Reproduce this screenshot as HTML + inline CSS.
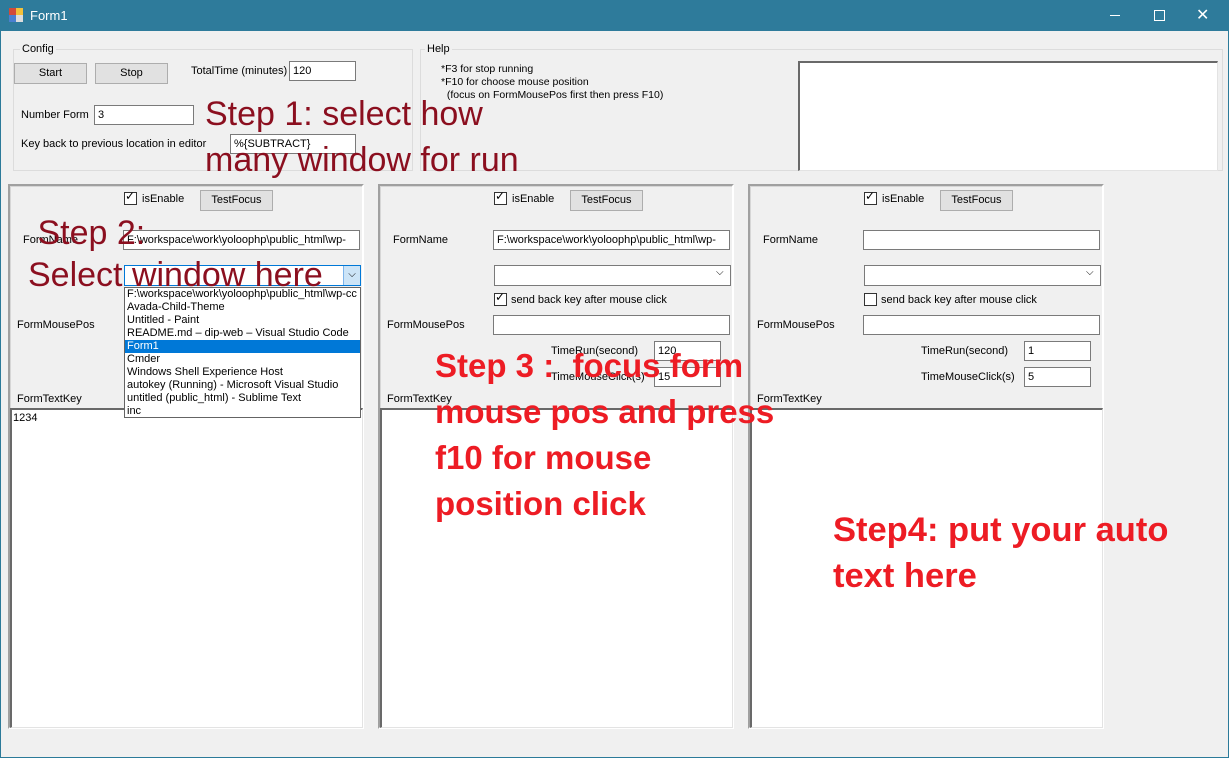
<!DOCTYPE html>
<html><head><meta charset="utf-8"><style>
*{margin:0;padding:0;box-sizing:border-box}
body{width:1229px;height:758px;background:#f0f0f0;font-family:"Liberation Sans",sans-serif;font-size:11px;color:#000;position:relative;overflow:hidden}
.a{position:absolute;white-space:nowrap}
.win{position:absolute;left:0;top:0;width:1229px;height:758px;border:1px solid #2b7a99;border-top:none}
.title{position:absolute;left:0;top:0;width:1229px;height:31px;background:#2e7b9b;color:#fff;font-size:12px}
.tb{position:absolute;background:#fff;border:1px solid #7a7a7a;font-size:11px;padding:2px 3px;line-height:14px;overflow:hidden}
.btn{position:absolute;background:#e1e1e1;border:1px solid #adadad;text-align:center;line-height:18px;font-size:11px}
.grp{position:absolute;border:1px solid #dcdcdc}
.panel{position:absolute;border-top:2px solid #a0a0a0;border-left:2px solid #a0a0a0;border-right:2px solid #fff;border-bottom:2px solid #fff;box-shadow:1px 1px 0 #d6d6d6 inset}
.ta{position:absolute;background:#fff;border-left:2px solid #696969;border-top:2px solid #696969;border-right:1px solid #e3e3e3;border-bottom:1px solid #e3e3e3}
.cb{position:absolute;width:13px;height:13px;border:1px solid #333;background:#fff}
.big1{color:#8b0f1f;font-size:34px;line-height:46px}
.big2{color:#ed1c24;font-weight:bold;line-height:46px}
</style></head><body>
<div class="win"></div>
<div class="title">
 <div class="a" style="left:9px;top:8px;width:7px;height:7px;background:#d24a3a"></div>
 <div class="a" style="left:16px;top:8px;width:7px;height:7px;background:#f3c13a"></div>
 <div class="a" style="left:9px;top:15px;width:7px;height:7px;background:#4a7fd0"></div>
 <div class="a" style="left:16px;top:15px;width:7px;height:7px;background:#ddd"></div>
 <div class="a" style="left:30px;top:8px;font-size:13px">Form1</div>
 <div class="a" style="left:1110px;top:15px;width:10px;height:1px;background:#fff"></div>
 <div class="a" style="left:1154px;top:10px;width:11px;height:11px;border:1px solid #fff"></div>
 <div class="a" style="left:1196px;top:5px;font-size:16px;color:#fff">✕</div>
</div>

<div class="grp" style="left:13px;top:49px;width:400px;height:122px"></div>
<div class="a" style="left:20px;top:43px;background:#f0f0f0;padding:0 2px">Config</div>
<div class="btn" style="left:14px;top:63px;width:73px;height:21px">Start</div>
<div class="btn" style="left:95px;top:63px;width:73px;height:21px">Stop</div>
<div class="a" style="left:191px;top:65px">TotalTime (minutes)</div>
<div class="tb" style="left:289px;top:61px;width:67px;height:20px">120</div>
<div class="a" style="left:21px;top:109px">Number Form</div>
<div class="tb" style="left:94px;top:105px;width:100px;height:20px">3</div>
<div class="a" style="left:21px;top:138px">Key back to previous location in editor</div>
<div class="tb" style="left:230px;top:134px;width:126px;height:20px">%{SUBTRACT}</div>

<div class="grp" style="left:420px;top:49px;width:803px;height:122px"></div>
<div class="a" style="left:425px;top:43px;background:#f0f0f0;padding:0 2px">Help</div>
<div class="a" style="left:441px;top:63px;line-height:13px;font-size:10.5px">*F3 for stop running<br>*F10 for choose mouse position<br>&nbsp; (focus on FormMousePos first then press F10)</div>
<div class="ta" style="left:798px;top:61px;width:420px;height:110px"></div>

<div class="panel" style="left:8px;top:184px;width:356px;height:545px"></div>
<div class="panel" style="left:378px;top:184px;width:356px;height:545px"></div>
<div class="panel" style="left:748px;top:184px;width:356px;height:545px"></div>

<!-- panel 1 -->
<div class="cb" style="left:124px;top:192px"></div><div class="a" style="left:125px;top:189px;font-size:12px">✓</div>
<div class="a" style="left:142px;top:193px">isEnable</div>
<div class="btn" style="left:200px;top:190px;width:73px;height:21px">TestFocus</div>
<div class="a" style="left:23px;top:234px">FormName</div>
<div class="tb" style="left:123px;top:230px;width:237px;height:20px">F:\workspace\work\yoloophp\public_html\wp-cc</div>
<div class="a" style="left:17px;top:319px">FormMousePos</div>
<div class="a" style="left:17px;top:393px">FormTextKey</div>
<div class="ta" style="left:10px;top:408px;width:353px;height:320px"><div style="padding:2px 1px">1234</div></div>
<div class="a" style="left:124px;top:265px;width:237px;height:21px;border:1px solid #0078d7;background:#fff"></div>
<div class="a" style="left:343px;top:266px;width:17px;height:19px;background:#cce4f7;border-left:1px solid #7eb4ea;text-align:center;font-size:10px;line-height:18px">⌵</div>
<div class="a" style="left:124px;top:287px;width:237px;height:131px;border:1px solid #646464;background:#fff;line-height:13px;font-size:11px;padding-left:2px;overflow:hidden">
F:\workspace\work\yoloophp\public_html\wp-cc<br>Avada-Child-Theme<br>Untitled - Paint<br>README.md – dip-web – Visual Studio Code<br><div style="background:#0078d7;color:#fff;margin-left:-2px;padding-left:2px">Form1</div>Cmder<br>Windows Shell Experience Host<br>autokey (Running) - Microsoft Visual Studio<br>untitled (public_html) - Sublime Text<br>inc</div>

<!-- panel 2 -->
<div class="cb" style="left:494px;top:192px"></div><div class="a" style="left:495px;top:189px;font-size:12px">✓</div>
<div class="a" style="left:512px;top:193px">isEnable</div>
<div class="btn" style="left:570px;top:190px;width:73px;height:21px">TestFocus</div>
<div class="a" style="left:393px;top:234px">FormName</div>
<div class="tb" style="left:493px;top:230px;width:237px;height:20px">F:\workspace\work\yoloophp\public_html\wp-cc</div>
<div class="tb" style="left:494px;top:265px;width:237px;height:21px"></div><div class="a" style="left:716px;top:267px;font-size:10px">⌵</div>
<div class="cb" style="left:494px;top:293px"></div><div class="a" style="left:495px;top:290px;font-size:12px">✓</div>
<div class="a" style="left:511px;top:294px">send back key after mouse click</div>
<div class="a" style="left:387px;top:319px">FormMousePos</div>
<div class="tb" style="left:493px;top:315px;width:237px;height:20px"></div>
<div class="a" style="left:551px;top:345px">TimeRun(second)</div>
<div class="tb" style="left:654px;top:341px;width:67px;height:20px">120</div>
<div class="a" style="left:551px;top:371px">TimeMouseClick(s)</div>
<div class="tb" style="left:654px;top:367px;width:67px;height:20px">15</div>
<div class="a" style="left:387px;top:393px">FormTextKey</div>
<div class="ta" style="left:380px;top:408px;width:353px;height:320px"></div>

<!-- panel 3 -->
<div class="cb" style="left:864px;top:192px"></div><div class="a" style="left:865px;top:189px;font-size:12px">✓</div>
<div class="a" style="left:882px;top:193px">isEnable</div>
<div class="btn" style="left:940px;top:190px;width:73px;height:21px">TestFocus</div>
<div class="a" style="left:763px;top:234px">FormName</div>
<div class="tb" style="left:863px;top:230px;width:237px;height:20px"></div>
<div class="tb" style="left:864px;top:265px;width:237px;height:21px"></div><div class="a" style="left:1086px;top:267px;font-size:10px">⌵</div>
<div class="cb" style="left:864px;top:293px"></div>
<div class="a" style="left:881px;top:294px">send back key after mouse click</div>
<div class="a" style="left:757px;top:319px">FormMousePos</div>
<div class="tb" style="left:863px;top:315px;width:237px;height:20px"></div>
<div class="a" style="left:921px;top:345px">TimeRun(second)</div>
<div class="tb" style="left:1024px;top:341px;width:67px;height:20px">1</div>
<div class="a" style="left:921px;top:371px">TimeMouseClick(s)</div>
<div class="tb" style="left:1024px;top:367px;width:67px;height:20px">5</div>
<div class="a" style="left:757px;top:393px">FormTextKey</div>
<div class="ta" style="left:750px;top:408px;width:353px;height:320px"></div>

<!-- overlays -->
<div class="a big1" style="left:205px;top:91px">Step 1: select how<br>many window for run</div>
<div class="a big1" style="left:28px;top:212px;line-height:42px">&nbsp;Step 2:<br>Select window here</div>
<div class="a big2" style="left:435px;top:343px;font-size:33px">Step 3 :&nbsp; focus form<br>mouse pos and press<br>f10 for mouse<br>position click</div>
<div class="a big2" style="left:833px;top:507px;font-size:34.5px">Step4: put your auto<br>text here</div>
</body></html>
